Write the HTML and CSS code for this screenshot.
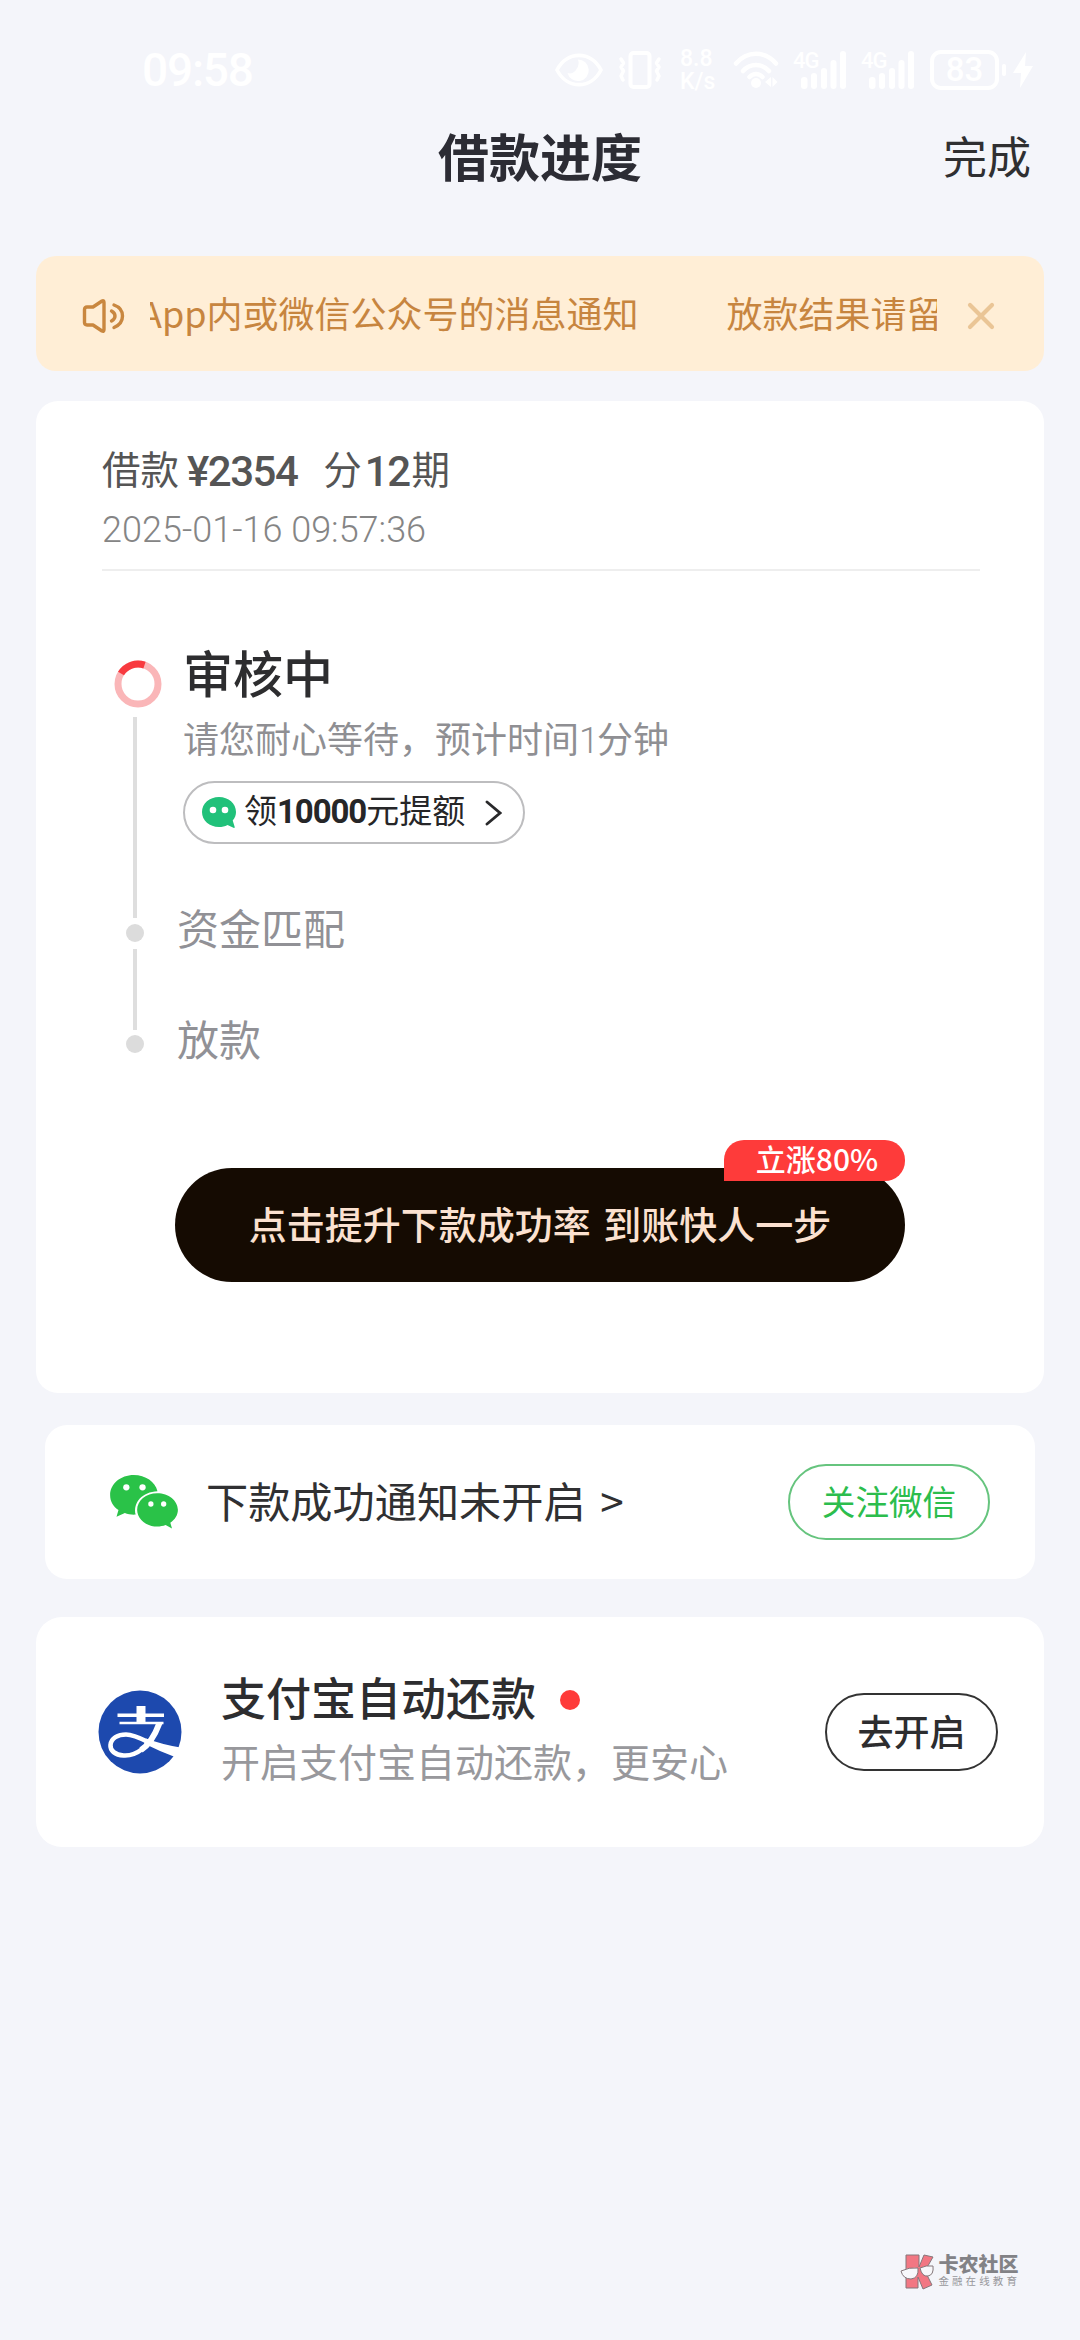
FILE: index.html
```html
<!DOCTYPE html>
<html lang="zh-CN">
<head>
<meta charset="utf-8">
<meta name="viewport" content="width=device-width">
<title>借款进度</title>
<link rel="stylesheet" href="styles.css">
</head>
<body>
<div class="screen">
  <div class="status">
    <span class="clock">09:58</span>
    <div class="status-icons">
      <svg class="i-eye" width="48" height="34" viewBox="0 0 48 34" fill="none" stroke="#fff" stroke-width="3.6"><path d="M2 17C12-2.500 36-2.500 46 17C36 36.500 12 36.500 2 17Z"/><path fill="#fff" stroke="none" d="M23 6.500a10.800 10.800 0 1 1-10.500 13.500a7 7 0 0 0 9-4a10 10 0 0 0 1.500-9.500Z"/></svg>
      <svg class="i-vibrate" width="46" height="38" viewBox="0 0 46 38" fill="none" stroke="#fff" stroke-width="3.500" stroke-linecap="round" stroke-linejoin="round"><rect x="13.500" y="2" width="19" height="34" rx="3" stroke-width="4"/><path d="M4 8l2.500 4-2.500 4 2.500 4-2.500 5 2 4M42 8l-2.500 4 2.500 4-2.500 4 2.500 5-2 4"/></svg>
      <div class="speed"><span>8.8</span><span>K/s</span></div>
      <svg class="i-wifi" width="46" height="38" viewBox="0 0 46 38" fill="none" stroke="#fff" stroke-width="4.500" stroke-linecap="round"><path d="M3 12.500C14-.5 32-.5 43 12.500M10 20c7-8 19-8 26 0M16.500 26c4-4 9-4 13 0" /><circle cx="23" cy="32" r="5" fill="#fff" stroke="none"/><path fill="#fff" stroke="none" d="M38 26v10l-6-5zM39.500 26v10l5-5z"/></svg>
      <div class="signal"><span class="net">4G</span><svg width="54" height="38" viewBox="0 0 54 38" fill="#fff"><rect x="8" y="26" width="6.500" height="12" rx="3"/><rect x="18" y="22" width="6" height="16" rx="3"/><rect x="28" y="17" width="6" height="21" rx="3"/><rect x="37.500" y="9" width="6" height="29" rx="3"/><rect x="47" y="0" width="6" height="38" rx="3"/></svg></div>
      <div class="signal"><span class="net">4G</span><svg width="54" height="38" viewBox="0 0 54 38" fill="#fff"><rect x="8" y="26" width="6.500" height="12" rx="3"/><rect x="18" y="22" width="6" height="16" rx="3"/><rect x="28" y="17" width="6" height="21" rx="3"/><rect x="37.500" y="9" width="6" height="29" rx="3"/><rect x="47" y="0" width="6" height="38" rx="3"/></svg></div>
      <div class="battery">83</div>
      <svg class="i-bolt" width="32" height="38" viewBox="0 0 32 38" fill="#fff"><rect x="0" y="13" width="4" height="12" rx="2"/><path d="M24 1L11 22h8l-1 15L31 15h-8z"/></svg>
    </div>
  </div>

  <header class="nav">
    <h1 class="nav-title">借款进度</h1>
    <span class="nav-done">完成</span>
  </header>

  <main class="content">
    <section class="notice">
      <svg class="i-speaker" width="44" height="36" viewBox="0 0 44 36" fill="none" stroke="#c9873f" stroke-width="3.400" stroke-linecap="round" stroke-linejoin="round"><path d="M6 9h6L21 3q2-1 2 1.500V31.500Q23 34 21 33L12 27H6Q3.500 27 3.500 24.500V11.500Q3.500 9 6 9Z"/><path d="M30.500 13q3.500 2 3.500 5t-3.500 5M33 7q8.500 3 8.500 11T33 29.500"/></svg>
      <div class="ticker"><div class="ticker-track"><span>App内或微信公众号的消息通知</span><span>放款结果请留意</span></div></div>
      <svg class="i-close" width="28" height="28" viewBox="0 0 28 28" stroke="#eac596" stroke-width="4.200" stroke-linecap="round"><path d="M3 3l22 22M25 3L3 25"/></svg>
    </section>

    <section class="card progress">
      <div class="loan">
        <div class="loan-line"><span>借款</span><span class="num amount">¥2354</span><span>分</span><span class="num term">12</span><span>期</span></div>
        <div class="loan-date">2025-01-16 09:57:36</div>
      </div>
      <ol class="steps">
        <li class="step current">
          <div class="rail">
            <svg class="ring" width="48" height="48" viewBox="0 0 48 48" fill="none" stroke-width="7"><circle cx="24" cy="24" r="20" stroke="#fab6b8"/><path stroke="#f83a3f" d="M7 13.500A20 20 0 0 1 30.500 5.100"/></svg>
            <i class="line"></i>
          </div>
          <div class="step-body">
            <div class="step-title">审核中</div>
            <div class="step-sub">请您耐心等待，预计时间<span class="light">1</span>分钟</div>
            <div class="promo">
              <svg class="i-chat" width="34" height="32" viewBox="0 0 34 32"><path fill="#21c17a" d="M17 0C7.500 0 0 6.500 0 15s7.500 15 17 15c3 0 6-.6 8.500-2l6.500 3q1 0 .7-1l-2-6.500C33 21 34 18 34 15C34 6.500 26.500 0 17 0Z"/><circle cx="11" cy="13" r="3.300" fill="#fff"/><circle cx="23" cy="13" r="3.300" fill="#fff"/></svg>
              <span class="promo-text">领<b>10000</b>元提额</span>
              <svg class="i-chevron" width="17" height="26" viewBox="0 0 17 26" fill="none" stroke="#29292b" stroke-width="2.800" stroke-linecap="round"><path d="M2 2l13 11L2 24"/></svg>
            </div>
          </div>
        </li>
        <li class="step match"><div class="rail"><i class="dot"></i><i class="line"></i></div><div class="step-name">资金匹配</div></li>
        <li class="step pay"><div class="rail"><i class="dot"></i></div><div class="step-name">放款</div></li>
      </ol>
      <div class="boost">点击提升下款成功率 到账快人一步<span class="badge">立涨80%</span></div>
    </section>

    <section class="card wechat">
      <svg class="i-wechat" width="69" height="55" viewBox="0 0 70 56"><path fill="#2ac248" d="M24 0C10.700 0 0 9 0 20.500C0 27 3.300 32 8.500 35.700L6.500 42.500L15 38.700C18 39.800 22 40.600 26 40.300C23 28 33 17 48.200 16.500C46 7 36 0 24 0Z"/><path fill="#2ac248" d="M48 18.500C36.500 18.500 27.500 26 27.500 35.500S36.500 52.500 48 52.500C51 52.500 54 52 56.500 51L63 54.500L61.300 48.700C66 45.500 69 41 69 35.500C69 26 59.500 18.500 48 18.500Z"/><g fill="#fff"><circle cx="16.500" cy="12.500" r="3.200"/><circle cx="33" cy="12.500" r="3.200"/><circle cx="41.500" cy="29.500" r="2.700"/><circle cx="54.500" cy="29.500" r="2.700"/></g></svg>
      <span class="wechat-text">下款成功通知未开启 &gt;</span>
      <span class="pill green">关注微信</span>
    </section>

    <section class="card alipay">
      <svg class="i-alipay" width="84" height="84" viewBox="0 0 84 84"><circle cx="42" cy="42" r="41.500" fill="#1d49ae"/><g fill="none" stroke="#fff"><path stroke-width="9" d="M43 16v17"/><path stroke-width="3.500" d="M19.500 25.200h46.500"/><path stroke-width="2.600" d="M21.500 33h44"/><path stroke-width="6" d="M61.500 33C57 45 51 55 43 60"/><path stroke-width="4.600" d="M45 58.500C38 64 32 66 25.500 65.500C17 65 12 60.500 12.500 55C13 48 20 44.500 28 44.500C36 44.500 44 49 52 53"/></g><path fill="#fff" d="M48 48.500Q64 54.500 82.500 57.500L77 67Q62 61.500 46 53.500z"/></svg>
      <div class="alipay-body">
        <div class="alipay-title">支付宝自动还款<i class="red-dot"></i></div>
        <div class="alipay-sub">开启支付宝自动还款，更安心</div>
      </div>
      <span class="pill dark">去开启</span>
    </section>
  </main>

  <footer class="brand">
    <svg class="i-brand" width="35" height="36" viewBox="0 0 35 36"><g stroke="#85777b" stroke-width="1"><path fill="#f27783" d="M6 1h13v12L24 1l9 2-8 14 7 14-9 4-5-12v11L6 34z"/><path fill="#f8f8fb" d="M1 17q8-4 17-3q1 10-7 11q-8 0-10-8zM20 14q6-3 13-2q1 9-5 10q-6 1-8-8z"/></g></svg>
    <div class="brand-text"><span class="brand-name">卡农社区</span><span class="brand-sub">金融在线教育</span></div>
  </footer>
</div>
</body>
</html>
```

FILE: styles.css
```css
* { box-sizing: border-box; margin: 0; padding: 0; }
body { background: #f4f5fa; font-family: "Noto Sans CJK SC", sans-serif; color: #2d2d2f; }
svg { display: block; flex: none; }
i { display: block; flex: none; }
.screen { width: 1080px; height: 2340px; display: flex; flex-direction: column; overflow: hidden; white-space: nowrap; }

.status { height: 112px; padding: 28px 46px 0 142px; display: flex; align-items: center; justify-content: space-between; color: #fff; font-family: Roboto, sans-serif; font-weight: 500; }
.clock { font-size: 46px; letter-spacing: -1.200px; }
.status-icons { display: flex; align-items: center; }
.i-vibrate { margin-left: 14px; }
.speed { display: flex; flex-direction: column; width: 38px; margin-left: 17px; font-size: 23px; line-height: 23px; }
.i-wifi { margin-left: 15px; }
.signal { display: grid; margin-left: 14px; }
.signal > * { grid-area: 1 / 1; }
.net { font-size: 22px; line-height: 20px; letter-spacing: -1px; }
.battery { width: 69px; height: 40px; margin-left: 15px; border: 4px solid #fff; border-radius: 11px; font-size: 33px; line-height: 32px; text-align: center; }
.i-bolt { margin-left: 3px; }

.nav { height: 88px; display: grid; grid-template-columns: 1fr auto 1fr; align-items: center; padding: 0 49px; }
.nav-title { grid-column: 2; margin-top: -2px; font-size: 51px; line-height: 60px; font-weight: 700; color: #2c2c34; }
.nav-done { justify-self: end; margin-top: -2px; font-size: 44px; line-height: 60px; color: #2f2f31; }

.content { padding: 56px 36px 0; display: flex; flex-direction: column; }
.card { background: #fff; border-radius: 22px; }

.notice { height: 115px; padding: 5px 48px 0 45px; border-radius: 20px; background: #ffeed6; display: flex; align-items: center; }
.ticker { width: 787px; margin: 0 30px 9px 25px; overflow: hidden; font-size: 36px; line-height: 54px; color: #c7853f; }
.ticker-track { display: flex; gap: 88px; width: max-content; margin-left: -10px; }

.progress { margin-top: 30px; height: 992px; padding: 0 64px 0 66px; display: flex; flex-direction: column; }
.loan { height: 170px; padding-top: 38px; border-bottom: 2px solid #eee; color: #555; }
.loan-line { display: flex; height: 56px; font-size: 38.500px; line-height: 56px; }
.num { font-family: Roboto, sans-serif; font-weight: 500; font-size: 42px; line-height: 66px; letter-spacing: -1.500px; }
.amount { margin: 0 26px 0 8px; }
.term { margin: 0 2px 0 3px; }
.loan-date { margin-top: 14px; font-family: Roboto, sans-serif; font-weight: 300; font-size: 36px; line-height: 42px; color: #858585; }

.steps { list-style: none; padding-left: 12px; margin-top: 89px; }
.step { display: flex; }
.rail { width: 48px; display: flex; flex-direction: column; align-items: flex-start; flex: none; }
.rail .line { width: 4px; margin-left: 19px; background: #dedede; }
.dot { width: 18px; height: 18px; margin-left: 12px; border-radius: 50%; background: #dcdcdc; }
.current { height: 264px; }
.current .line { height: 201px; margin-top: 9px; }
.step-body { margin: -19px 0 0 21px; }
.step-title { font-size: 50px; line-height: 60px; font-weight: 500; }
.step-sub { margin-top: 9px; font-size: 36px; line-height: 54px; color: #8f8f93; }
.light { font-family: Roboto, sans-serif; font-weight: 300; letter-spacing: -2px; }
.promo { margin-top: 13px; width: 342px; height: 63px; border: 2px solid #bdbdbf; border-radius: 32px; display: flex; align-items: center; padding-left: 17px; }
.promo-text { margin: -4px 0 0 8px; font-size: 33px; line-height: 50px; color: #262628; }
.promo b { font-family: Roboto, sans-serif; letter-spacing: -1.100px; }
.i-chevron { margin-left: 20px; }
.step-name { font-size: 42px; line-height: 60px; margin: -27px 0 0 15px; color: #919196; }
.match { height: 111px; }
.match .line { height: 81px; margin-top: 7px; }
.pay { height: 0; }

.boost { position: relative; width: 730px; height: 114px; margin: 133px 0 0 73px; border-radius: 57px; background: #150b02; color: #fbe1d0; font-size: 38px; line-height: 110px; font-weight: 500; text-align: center; word-spacing: 4px; }
.badge { position: absolute; top: -28px; right: 0; width: 181px; height: 41px; padding-left: 5px; border-radius: 20px 20px 20px 0; background: #fe3b3a; color: #fff; font-size: 30px; line-height: 37px; font-weight: 500; }

.wechat { margin: 32px 9px 0; height: 154px; padding: 0 45px 0 65px; display: flex; align-items: center; }
.wechat-text { flex: 1; margin: -5px 0 0 27px; font-size: 42.200px; line-height: 60px; word-spacing: 5px; color: #303032; }
.pill { display: flex; align-items: center; justify-content: center; border-radius: 40px; }
.green { width: 202px; height: 76px; padding-bottom: 4px; border: 2px solid #66c47e; color: #2cbd4d; font-size: 33.600px; }
.dark { width: 173px; height: 78px; padding-bottom: 5px; border: 2px solid #333; font-size: 36px; font-weight: 500; }

.alipay { margin-top: 38px; height: 230px; padding: 0 46px 0 62px; border-radius: 26px; display: flex; align-items: center; }
.alipay-body { flex: 1; margin: -9px 0 0 39px; }
.alipay-title { display: flex; align-items: center; font-size: 45px; line-height: 64px; font-weight: 500; }
.red-dot { width: 20px; height: 20px; margin: 6px 0 0 24px; border-radius: 50%; background: #fe3b3a; }
.alipay-sub { font-size: 39px; line-height: 62px; color: #98989c; }

.brand { margin: auto 60px 50px auto; display: flex; align-items: flex-start; gap: 3px; }
.brand-text { display: flex; flex-direction: column; }
.brand-name { margin-top: -1px; font-size: 20px; line-height: 22px; font-weight: 900; color: #828286; }
.brand-sub { font-size: 10.500px; line-height: 12px; letter-spacing: 3.100px; color: #98989c; }
```
